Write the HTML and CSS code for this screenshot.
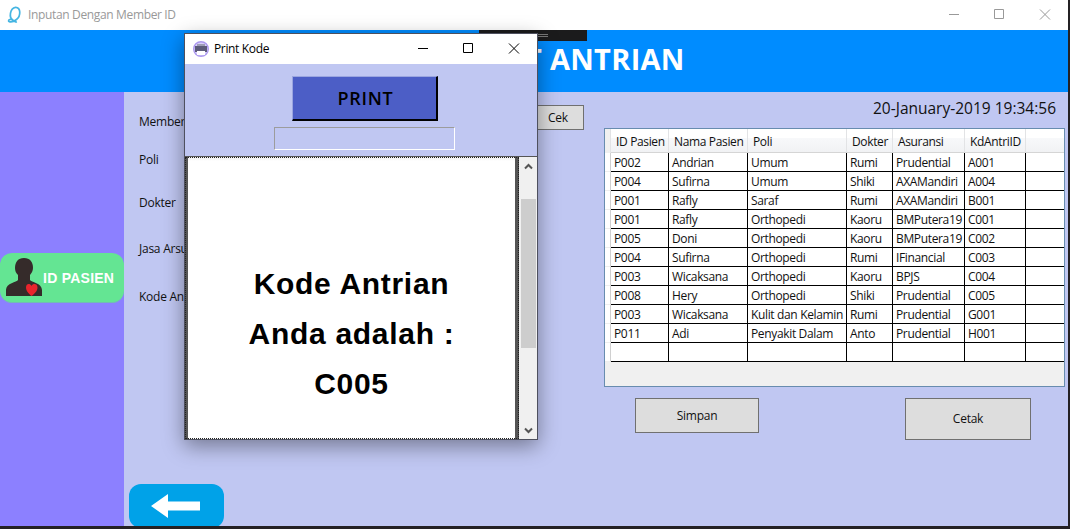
FILE: index.html
```html
<!DOCTYPE html>
<html lang="id">
<head>
<meta charset="utf-8">
<title>Inputan Dengan Member ID</title>
<link rel="stylesheet" href="styles.css">
</head>
<body>
<div class="desktop">
  <div class="window">
    <div class="titlebar">
      <svg class="app-icon" width="16" height="18" viewBox="0 0 16 18" fill="none" stroke="#45b5e2" stroke-width="1.700"><path d="M6 14C1.500 12 3 2 8.500 1.300C14 1 14 10 9.500 13.500C7.500 15 4 16.500 2 15.500C.8 14.800 2.500 12.700 4.500 13.500C7 14.500 8.500 16.300 10 16"/></svg>
      <span class="caption">Inputan Dengan Member ID</span>
      <svg class="controls" width="124" height="30" viewBox="0 0 124 30" fill="none" stroke="#999"><path d="M5 14.500h10M50.500 9.500h9v9h-9zM96 9.500l10 10M106 9.500l-10 10"/></svg>
    </div>
    <div class="header"><h1>T ANTRIAN</h1></div>
    <div class="main">
      <div class="sidebar">
        <div class="patient">
          <svg width="38" height="40" viewBox="0 0 38 40"><path fill="#352b2a" d="M19 0c6 0 9 4 9 10c0 3-1.500 5-3 7v5c1 2 12 3 12 10v6H1v-6c0-7 11-8 12-10v-5c-2-2-3-4-3-7c0-6 3-10 9-10z"/><path fill="#e9242c" d="M26.500 38C24 36 21 33 21 29.500c0-4 4-4.500 5.500-1.500c1.500-3 6-2.500 6 1.500c0 3.500-3 6.500-6 8.500z"/></svg>
          <span>ID PASIEN</span>
        </div>
      </div>
      <div class="form">
        <div class="fields">
          <span class="f1">Member ID</span><span class="f2">Poli</span><span class="f3">Dokter</span><span class="f4">Jasa Arsuransi</span><span class="f5">Kode Antrian</span>
        </div>
        <button class="btn cek">Cek</button>
        <div class="back"><svg width="50" height="24" viewBox="0 0 50 24"><path fill="#fff" d="M0 12L17 0v7.500h32v9H17V24z"/></svg></div>
      </div>
      <div class="queue">
        <div class="clock">20-January-2019 19:34:56</div>
        <div class="grid">
          <table>
            <colgroup><col class="c0"><col class="c1"><col class="c2"><col class="c3"><col class="c4"><col class="c5"><col class="c6"><col class="c7"></colgroup>
            <thead><tr><th></th><th>ID Pasien</th><th>Nama Pasien</th><th>Poli</th><th>Dokter</th><th>Asuransi</th><th>KdAntriID</th><th></th></tr></thead>
            <tbody>
              <tr><td></td><td>P002</td><td>Andrian</td><td>Umum</td><td>Rumi</td><td>Prudential</td><td>A001</td><td></td></tr>
              <tr><td></td><td>P004</td><td>Sufirna</td><td>Umum</td><td>Shiki</td><td>AXAMandiri</td><td>A004</td><td></td></tr>
              <tr><td></td><td>P001</td><td>Rafly</td><td>Saraf</td><td>Rumi</td><td>AXAMandiri</td><td>B001</td><td></td></tr>
              <tr><td></td><td>P001</td><td>Rafly</td><td>Orthopedi</td><td>Kaoru</td><td>BMPutera19</td><td>C001</td><td></td></tr>
              <tr><td></td><td>P005</td><td>Doni</td><td>Orthopedi</td><td>Kaoru</td><td>BMPutera19</td><td>C002</td><td></td></tr>
              <tr><td></td><td>P004</td><td>Sufirna</td><td>Orthopedi</td><td>Rumi</td><td>IFinancial</td><td>C003</td><td></td></tr>
              <tr><td></td><td>P003</td><td>Wicaksana</td><td>Orthopedi</td><td>Kaoru</td><td>BPJS</td><td>C004</td><td></td></tr>
              <tr><td></td><td>P008</td><td>Hery</td><td>Orthopedi</td><td>Shiki</td><td>Prudential</td><td>C005</td><td></td></tr>
              <tr><td></td><td>P003</td><td>Wicaksana</td><td>Kulit dan Kelamin</td><td>Rumi</td><td>Prudential</td><td>G001</td><td></td></tr>
              <tr><td></td><td>P011</td><td>Adi</td><td>Penyakit Dalam</td><td>Anto</td><td>Prudential</td><td>H001</td><td></td></tr>
              <tr><td></td><td></td><td></td><td></td><td></td><td></td><td></td><td></td></tr>
            </tbody>
          </table>
        </div>
        <div class="actions"><button class="btn simpan">Simpan</button><button class="btn cetak">Cetak</button></div>
      </div>
    </div>
  </div>
  <div class="debug-bar"></div>
  <div class="dialog">
    <div class="dialog-title">
      <svg width="16" height="16" viewBox="0 0 16 16"><circle cx="8" cy="8" r="7.300" fill="#d9cffb" stroke="#ab98ee" stroke-width="1.400"/><path fill="#9d9db5" d="M4 3h8v2H4z"/><path fill="#5c5b79" d="M2 5h12v6H2z"/><path fill="#fff" d="M4 10h8v4H4z"/></svg>
      <span>Print Kode</span>
      <svg class="controls" width="124" height="30" viewBox="0 0 124 30" fill="none" stroke="#000"><path d="M5 14.500h10M50.500 9.500h9v9h-9zM96 9.500l10 10M106 9.500l-10 10"/></svg>
    </div>
    <div class="print-panel"><button class="print">PRINT</button><div class="code-input"></div></div>
    <div class="viewer">
      <div class="page"><p>Kode Antrian</p><p>Anda adalah :</p><p>C005</p></div>
      <div class="scrollbar">
        <svg width="9" height="7" viewBox="0 0 9 7" fill="none" stroke="#555" stroke-width="2"><path d="M1 5.500L4.500 2L8 5.500"/></svg>
        <div class="thumb"></div>
        <svg width="9" height="7" viewBox="0 0 9 7" fill="none" stroke="#555" stroke-width="2"><path d="M1 1.500L4.500 5L8 1.500"/></svg>
      </div>
    </div>
  </div>
</div>
</body>
</html>
```
FILE: styles.css
```css
* { box-sizing: border-box; }
body { margin: 0; font: 12px/16px "Open Sans", "Noto Sans", sans-serif; letter-spacing: -0.35px; color: #111; }
svg { display: block; flex: none; }
.desktop { position: relative; width: 1070px; height: 529px; background: #242124; overflow: hidden; }
.window { width: 1068px; height: 526px; display: flex; flex-direction: column; background: #c0c7f2; overflow: hidden; }
.titlebar { height: 30px; flex: none; background: #fff; display: flex; align-items: center; padding-left: 7px; color: #999; }
.caption { margin-left: 5px; }
.controls { margin-left: auto; }
.header { height: 62px; flex: none; background: #008cff; padding-left: 525px; }
h1 { margin: 9px 0 0; font-size: 29px; line-height: 40px; font-weight: 700; color: #fff; letter-spacing: 0.3px; white-space: nowrap; }
.main { flex: 1; display: flex; min-height: 0; }
.sidebar { width: 124px; background: #8c80ff; padding-top: 161px; }
.patient { height: 50px; border-radius: 12px; background: #64e593; display: flex; align-items: center; padding-left: 5px; border-bottom: 1px solid #72bcb4; }
.patient span { font: bold 14px "Liberation Sans", Arial, sans-serif; color: #fff; letter-spacing: 0.25px; white-space: nowrap; padding-top: 1px; }
.form { width: 480px; display: grid; grid-template-columns: 408px 52px; grid-template-rows: 392px 42px; }
.fields { display: flex; flex-direction: column; padding: 22px 0 0 15px; letter-spacing: -0.25px; }
.f2 { margin-top: 22px; }
.f3 { margin-top: 27px; }
.f4 { margin-top: 30px; }
.f5 { margin-top: 32px; }
.btn { font: inherit; letter-spacing: -0.25px; color: #111; background: #ddd; border: 1px solid #707070; padding: 0; }
.cek { height: 25px; margin-top: 13px; }
.back { width: 95px; height: 44px; margin-left: 5px; border-radius: 12px; background: #00a2e8; display: flex; align-items: center; justify-content: center; padding-right: 2px; }
.queue { width: 461px; }
.clock { height: 36px; padding: 6px 9px 0 0; text-align: right; font-size: 15.5px; line-height: 20px; letter-spacing: 0; }
.grid { height: 259px; border: 1px solid #688caf; background: #f0f0f0; }
table { width: 459px; table-layout: fixed; border-collapse: separate; border-spacing: 0; }
.c0 { width: 6px; }
.c1 { width: 58px; }
.c2 { width: 79px; }
.c3 { width: 99px; }
.c4 { width: 46px; }
.c5 { width: 72px; }
.c6 { width: 61px; }
.c7 { width: 38px; }
th { height: 24px; padding: 2px 0 0 5px; text-align: left; font-weight: 400; white-space: nowrap; background: linear-gradient(#fff 40%, #f7f8fa 41%, #f1f2f4); border-right: 1px solid #e2e3e5; border-bottom: 1px solid #d5d5d5; }
th:first-child { background: #f0f0f0; padding: 0; border-bottom: 0; }
th:last-child { border-right: 0; }
td { height: 19px; padding: 1px 0 0 3px; line-height: 16px; white-space: nowrap; background: #fff; border-right: 1px solid #000; border-bottom: 1px solid #000; }
td:first-child { border-color: #d0d0d0; border-bottom-color: #eee; padding: 0; }
td:last-child { border-right: 0; padding: 0; }
.actions { display: flex; justify-content: space-between; align-items: flex-start; padding: 11px 34px 0 31px; }
.simpan { width: 124px; height: 35px; }
.cetak { width: 126px; height: 42px; }
/* floating debugger toolbar and dialog sit over the main window */
.debug-bar { position: absolute; left: 479px; top: 30px; width: 108px; height: 11px; background: linear-gradient(#777, #777) 59px 4px / 10px 1px no-repeat, linear-gradient(#777, #777) 59px 6px / 10px 1px no-repeat, #1b1b1c; }
.dialog { position: absolute; left: 184px; top: 33px; width: 354px; height: 407px; border: 1px solid #4e505e; background: #c0c7f2; display: flex; flex-direction: column; box-shadow: 0 6px 20px rgba(0,0,0,.4); }
.dialog-title { height: 30px; flex: none; display: flex; align-items: center; background: #fff; color: #000; padding-left: 8px; }
.dialog-title span { margin-left: 5px; }
.print-panel { height: 93px; flex: none; padding-top: 12px; border-bottom: 1px solid #555; }
.print { display: block; width: 146px; height: 45px; margin-left: 107px; padding: 0 0 1px 2px; background: #4c5ec6; border: 1px solid; border-width: 1px 2px 2px 1px; border-color: #9ba6e0 #000 #000 #9ba6e0; font: 600 18px "Open Sans", sans-serif; color: #000; letter-spacing: 0.7px; }
.code-input { width: 181px; height: 23px; margin: 6px 0 0 89px; border: 1px solid; border-color: #9c9c9c #fff #fff #9c9c9c; }
.viewer { flex: 1; display: flex; min-height: 0; }
.page { width: 334px; border: solid #555; border-width: 0 4px 0 3px; background: linear-gradient(#f0f0f0, #fff 4px); text-align: center; font: bold 30px/50px "Liberation Sans", Arial, sans-serif; color: #000; padding-top: 102px; outline: 1px dotted #222; outline-offset: -1px; }
.page p { margin: 0; letter-spacing: 0.7px; }
.scrollbar { width: 18px; display: flex; flex-direction: column; align-items: center; background: #f0f0f0; padding: 6px 0 5px; }
.thumb { width: 15px; height: 149px; background: #cdcdcd; margin: 29px 0 auto; }
```
